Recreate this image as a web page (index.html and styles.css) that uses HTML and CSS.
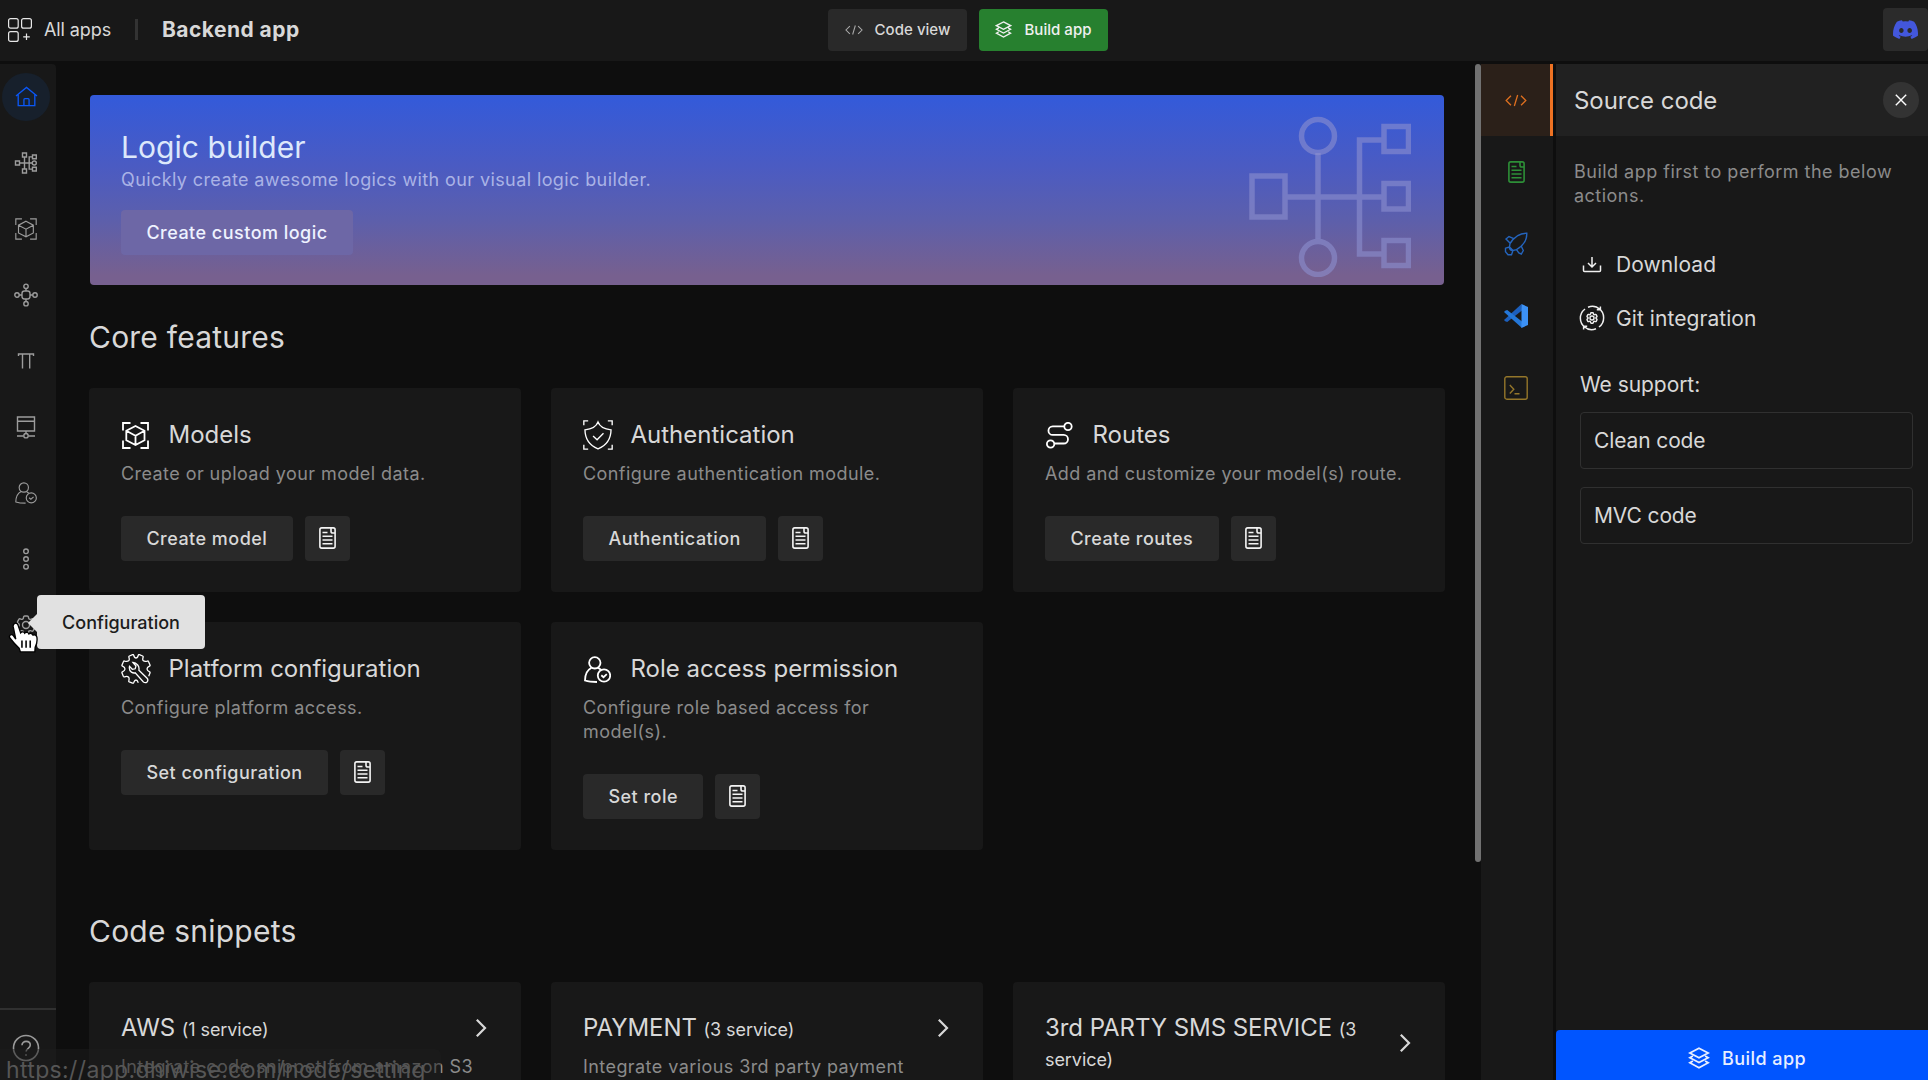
FILE: index.html
```html
<!DOCTYPE html>
<html lang="en">
<head>
<meta charset="utf-8">
<title>Backend app</title>
<link rel="stylesheet" href="styles.css">
</head>
<body>
<svg class="defs" width="0" height="0" aria-hidden="true">
  <symbol id="i-cube" viewBox="0 0 27 27"><path d="M1 8.500V1h7.500M18.500 1H26v7.500M26 18.500V26h-7.500M8.500 26H1v-7.500M13.500 4l9 4.800v9.500l-9 4.800-9.200-4.800V8.800zM4.300 8.800l9.200 4.900 9-4.900M13.500 13.700v9.400"/></symbol>
  <symbol id="i-shield" viewBox="0 0 29 29"><path d="M.8 5V.8H5M24 .8h4.200V5M28.200 24v4.200H24M5 28.200H.8V24M14.500 2C13 6 8 9 1.900 9.500 2 18 6 24.500 14.500 28 23 24.500 27 18 27.100 9.500 21 9 16 6 14.500 2zM9.700 15.500l3.900 3.600 6.200-6.200"/></symbol>
  <symbol id="i-route" viewBox="0 0 27 27"><circle cx="22" cy="4.500" r="3.700"/><circle cx="4.600" cy="22" r="3.700"/><path d="M18.200 4.400H6.700a4.200 4.200 0 0 0 0 8.500h11a4.200 4.200 0 0 1 0 8.600H8.500"/></symbol>
  <symbol id="i-doc" viewBox="0 0 17 22"><rect x=".9" y=".9" width="15.200" height="20.200" rx="1.800"/><path d="M12 1v3.200q0 1.800 1.800 1.800H16M3.500 5.500h5M3.500 9.300h10M3.500 13h10M3.500 16.800h10"/></symbol>
  <symbol id="i-tool" viewBox="0 0 30 30"><path d="M15 4q1.500 0 2.300-2.800.3-.8 1.100-.5L21.600 2q.8.400.5 1.200-.9 2.600.3 3.600t3.900.3q.9-.3 1.200.5L29 11q.3.800-.5 1.200Q26 13.400 26 15t2.600 2.800q.7.400.4 1.200l-1.300 3.300M15 4q-1.500 0-2.300-2.800-.3-.8-1.100-.5L8.400 2q-.8.400-.5 1.200.9 2.600-.3 3.600t-3.900.3q-.9-.3-1.200.5L1 11q-.3.800.5 1.200Q4 13.400 4 15t-2.600 2.800q-.7.400-.4 1.200l1.300 3.300q.4.800 1.200.5 2.700-.9 3.900.2t.4 3.700q-.3.800.5 1.200l3.200 1.200q.8.300 1.200-.5 1-2.600 2.300-2.600t2.300 2.800M12 8.500l3 3.500-.8 2.800-2.900.5-2.800-3q-.8 4 1.900 5.800 2 1.300 3.800.7l8.200 9.200q2 1.400 3.700-.1 1.500-2 0-3.700l-8.200-8q.6-3-1.200-5.200Q14.500 8.600 12 8.500z"/></symbol>
  <symbol id="i-role" viewBox="0 0 27 27"><circle cx="10.800" cy="6.800" r="5.700"/><path d="M7.500 11.700C3 14 1 18.500 1 24.500q4.500 1.500 12 1.500M14 11.700l3 2.100"/><circle cx="20" cy="19.500" r="6.200"/><path d="M17.300 19.300l2.200 1.900 3.300-3"/></symbol>
  <symbol id="i-home" viewBox="0 0 24 22"><path d="M1 10.500L12 1.500l11 9M3.300 9v11.500h17.400V9M9.300 20.500v-6.200q0-1 1-1h3.400q1 0 1 1v6.200"/></symbol>
  <symbol id="i-logic" viewBox="0 0 24 24"><path d="M1.500 10h4v4h-4zM8.500 2h4v4h-4zM8.500 18h4v4h-4zM18.500 4h3.800v3.800h-3.800zM18.500 16.200h3.800V20h-3.800zM5.500 12h12.700M10.500 6v12M18.500 5.900h-3.300v12.200h3.300"/><circle cx="20.300" cy="12" r="2"/></symbol>
  <symbol id="i-node" viewBox="0 0 24 24"><rect x="8" y="8" width="8" height="8" rx="2.400"/><circle cx="12" cy="3.300" r="2.200"/><circle cx="12" cy="20.700" r="2.200"/><circle cx="3" cy="12" r="2.200"/><circle cx="21" cy="12" r="2.200"/><path d="M12 5.500V8M12 16v2.500M5.200 12H8M16 12h2.800"/></symbol>
  <symbol id="i-pi" viewBox="0 0 24 24"><path d="M4.500 7V5h15v2M8.500 5v14.500M15.700 5v14.500"/></symbol>
  <symbol id="i-server" viewBox="0 0 24 24"><path d="M3.500 2h17v14h-17zM3.500 6.200h17M12 16v2.500M3 21h6.500M14.500 21H21"/><circle cx="12" cy="20.700" r="2.200"/></symbol>
  <symbol id="i-dots" viewBox="0 0 24 24"><circle cx="12" cy="4.300" r="2.300"/><circle cx="12" cy="12" r="2.300"/><circle cx="12" cy="19.700" r="2.300"/></symbol>
  <symbol id="i-gear" viewBox="0 0 24 24"><path d="M9.594 3.940c.09-.542.56-.94 1.110-.94h2.593c.55 0 1.020.398 1.110.94l.213 1.281c.063.374.313.686.645.87.074.04.147.083.22.127.325.196.72.257 1.075.124l1.217-.456a1.125 1.125 0 0 1 1.370.49l1.296 2.247a1.125 1.125 0 0 1-.26 1.431l-1.003.827c-.293.241-.438.613-.43.992a7.723 7.723 0 0 1 0 .255c-.008.378.137.75.43.991l1.004.827c.424.35.534.955.26 1.430l-1.298 2.247a1.125 1.125 0 0 1-1.369.491l-1.217-.456c-.355-.133-.75-.072-1.076.124a6.470 6.470 0 0 1-.22.128c-.331.183-.581.495-.644.869l-.213 1.281c-.09.543-.56.94-1.110.94h-2.594c-.55 0-1.019-.398-1.110-.94l-.213-1.281c-.062-.374-.312-.686-.644-.87a6.520 6.520 0 0 1-.22-.127c-.325-.196-.72-.257-1.076-.124l-1.217.456a1.125 1.125 0 0 1-1.369-.49l-1.297-2.247a1.125 1.125 0 0 1 .26-1.431l1.004-.827c.292-.24.437-.613.43-.991a6.932 6.932 0 0 1 0-.255c.007-.38-.138-.751-.43-.992l-1.004-.827a1.125 1.125 0 0 1-.26-1.430l1.297-2.247a1.125 1.125 0 0 1 1.370-.491l1.216.456c.356.133.751.072 1.076-.124.072-.044.146-.086.22-.128.332-.183.582-.495.644-.869z"/><circle cx="12" cy="12" r="3.500"/></symbol>
  <symbol id="i-code" viewBox="0 0 24 14"><path d="M6.500 1.800L1.300 7l5.200 5.200M17.500 1.800L22.700 7l-5.200 5.200M13.800 1l-3.600 12"/></symbol>
  <symbol id="i-layers" viewBox="0 0 18 18"><path d="M9 1l7.500 3.900L9 8.800 1.500 4.900zM4 7.300L1.500 8.800 9 12.700l7.500-3.900L14 7.300M4 11.400l-2.500 1.500L9 16.900l7.500-4-2.500-1.500"/></symbol>
  <symbol id="i-chev" viewBox="0 0 12 20"><path d="M1.800 1.800L10 10l-8.200 8.200"/></symbol>
</svg>

<header class="topbar">
  <a class="all-apps">
    <svg class="ico apps-ico" viewBox="0 0 24 24"><rect x=".6" y=".6" width="9.600" height="9.600" rx="2"/><rect x="13.600" y=".6" width="9.800" height="9.600" rx="2"/><rect x=".6" y="13.600" width="9.600" height="9.800" rx="2"/><path d="M18.500 15.500v6.600M15.200 18.800h6.600"/></svg>
    <span>All apps</span>
  </a>
  <span class="divider"></span>
  <h1 class="app-name">Backend app</h1>
  <div class="actions">
    <button class="btn-top"><svg class="ico code-ico"><use href="#i-code"/></svg>Code view</button>
    <button class="btn-top green"><svg class="ico lay-ico"><use href="#i-layers"/></svg>Build app</button>
  </div>
  <span class="discord"><svg viewBox="0 0 24 18"><path d="M20.300 1.500A19.800 19.800 0 0 0 15.400 0l-.7 1.300a18.300 18.300 0 0 0-5.400 0L8.600 0a19.700 19.700 0 0 0-4.900 1.500C.6 6.100-.3 10.600.1 15a19.900 19.900 0 0 0 6 3l1.300-2.100-1.900-.9.500-.4a14.200 14.200 0 0 0 12.100 0l.4.400-1.900.9 1.300 2.100a19.800 19.800 0 0 0 6-3c.5-5.100-.8-9.600-3.600-13.500zM8 12.300c-1.200 0-2.100-1.100-2.100-2.400s.9-2.400 2.100-2.400 2.200 1.100 2.200 2.400-1 2.400-2.200 2.400zm8 0c-1.200 0-2.200-1.100-2.200-2.400s1-2.400 2.200-2.400 2.200 1.100 2.200 2.400-1 2.400-2.200 2.400z"/></svg></span>
</header>

<div class="body">
  <nav class="side">
    <a class="nav on"><svg class="ico home"><use href="#i-home"/></svg></a>
    <a class="nav"><svg class="ico"><use href="#i-logic"/></svg></a>
    <a class="nav"><svg class="ico cube"><use href="#i-cube"/></svg></a>
    <a class="nav"><svg class="ico"><use href="#i-node"/></svg></a>
    <a class="nav"><svg class="ico"><use href="#i-pi"/></svg></a>
    <a class="nav"><svg class="ico"><use href="#i-server"/></svg></a>
    <a class="nav"><svg class="ico cube"><use href="#i-role"/></svg></a>
    <a class="nav"><svg class="ico"><use href="#i-dots"/></svg></a>
    <a class="nav"><svg class="ico"><use href="#i-gear"/></svg>
      <span class="tip">Configuration</span>
      <svg class="hand" viewBox="0 0 30 32"><path d="M7.500 17.500L5 5.500C4.500 2 8.500.8 9.700 4l2.500 7.500c1-1.500 3.500-1.200 4 .3 1.200-1.300 3.500-.8 4 .7 1.300-1 3.500-.3 4 1.200 1.500-.8 3.500 0 3.800 2 .6 4-.2 7-1.700 9.800L26 30H12l-1.200-3.500C8 24 4.500 20 1.800 16.500c-1.500-2.500 1.500-4.500 3.500-2.200z"/><path class="knuckle" d="M13.500 19v7M17.500 19v7M21.500 19v7"/></svg>
    </a>
    <div class="help"><svg class="ico" viewBox="0 0 28 28"><circle cx="14" cy="14" r="12.500"/><path d="M10 11.300c0-5.300 8.300-5 8.300-.2 0 3.200-4.200 3.200-4.200 6.500M14 20.300v1.400"/></svg></div>
  </nav>

  <main class="main">
    <section class="hero">
      <div>
        <h2>Logic builder</h2>
        <p>Quickly create awesome logics with our visual logic builder.</p>
        <button class="btn glass">Create custom logic</button>
      </div>
      <svg class="hero-art" viewBox="0 0 162 162"><path d="M3 61h33v41H3zM135 11.500h24.500v25H135zM135 68.500h24.500V94H135zM135 125.500h24.500v25H135zM36 82h99M69 38v86M135 25h-24.500v114H135"/><circle cx="69" cy="21" r="16.500"/><circle cx="69" cy="143" r="16.500"/></svg>
    </section>

    <h2 class="heading core">Core features</h2>
    <div class="grid">
      <article class="card">
        <h3><svg class="ico ci"><use href="#i-cube"/></svg>Models</h3>
        <p>Create or upload your model data.</p>
        <div class="row"><button class="btn">Create model</button><button class="btn sq"><svg class="ico doc"><use href="#i-doc"/></svg></button></div>
      </article>
      <article class="card">
        <h3><svg class="ico ci thin"><use href="#i-shield"/></svg>Authentication</h3>
        <p>Configure authentication module.</p>
        <div class="row"><button class="btn">Authentication</button><button class="btn sq"><svg class="ico doc"><use href="#i-doc"/></svg></button></div>
      </article>
      <article class="card">
        <h3><svg class="ico ci"><use href="#i-route"/></svg>Routes</h3>
        <p>Add and customize your model(s) route.</p>
        <div class="row"><button class="btn">Create routes</button><button class="btn sq"><svg class="ico doc"><use href="#i-doc"/></svg></button></div>
      </article>
      <article class="card">
        <h3><svg class="ico ci thin"><use href="#i-tool"/></svg>Platform configuration</h3>
        <p>Configure platform access.</p>
        <div class="row"><button class="btn">Set configuration</button><button class="btn sq"><svg class="ico doc"><use href="#i-doc"/></svg></button></div>
      </article>
      <article class="card">
        <h3><svg class="ico ci"><use href="#i-role"/></svg>Role access permission</h3>
        <p>Configure role based access for model(s).</p>
        <div class="row"><button class="btn">Set role</button><button class="btn sq"><svg class="ico doc"><use href="#i-doc"/></svg></button></div>
      </article>
    </div>

    <h2 class="heading snips">Code snippets</h2>
    <div class="grid">
      <article class="card snip">
        <div class="snip-head"><h3>AWS <small>(1 service)</small></h3><svg class="ico chev"><use href="#i-chev"/></svg></div>
        <p>Integrate code snippet from amazon S3</p>
      </article>
      <article class="card snip">
        <div class="snip-head"><h3>PAYMENT <small>(3 service)</small></h3><svg class="ico chev"><use href="#i-chev"/></svg></div>
        <p>Integrate various 3rd party payment</p>
      </article>
      <article class="card snip">
        <div class="snip-head"><h3>3rd PARTY SMS SERVICE <small>(3 service)</small></h3><svg class="ico chev"><use href="#i-chev"/></svg></div>
      </article>
    </div>
  </main>

  <div class="track"><div class="thumb"></div></div>

  <div class="tabs">
    <a class="tab t-code"><svg class="ico"><use href="#i-code"/></svg></a>
    <a class="tab t-doc"><svg class="ico doc"><use href="#i-doc"/></svg></a>
    <a class="tab t-ship"><svg class="ico" viewBox="0 0 24 24"><path d="M22.800 1.200C16 1 10.500 4.500 6 11.500L5.500 15 9 18.500l3.500-.8C19.500 13.500 23 8 22.800 1.200zM9.800 6.700L5 4.500 2 7l4.500 4.500M17.300 14.200l2 4.300-2 3.500-2.500-1-2.300-3.300M5.500 15l-4 1.200v3.500l2.500 3h3.500L9 18.500M5.500 15c-.5 2 1.500 4 3.500 3.500"/></svg></a>
    <a class="tab"><svg class="vs" viewBox="0 0 24 24"><path fill="#1c5fbd" d="M17.500 0L18 6.500 3.200 18 1.200 17.200 0 16z"/><path fill="#2477d8" d="M1.200 6.800L3.200 6 18 17.500V24L0 8z"/><path fill="#3c91f5" d="M17.500 0L24 3v18l-6.500 3z"/></svg></a>
    <a class="tab t-term"><svg class="ico" viewBox="0 0 24 24"><rect x=".8" y=".8" width="22.400" height="22.400" rx="2"/><path d="M5.800 9l4 4.200-4 4.200M10.500 17.800h5"/></svg></a>
  </div>

  <aside class="panel">
    <div class="panel-head"><h2>Source code</h2><span class="close"><svg class="ico" viewBox="0 0 12 12"><path d="M.8.8l10.400 10.400M11.200.8L.8 11.200"/></svg></span></div>
    <p class="note">Build app first to perform the below actions.</p>
    <a class="link"><svg class="ico" viewBox="0 0 24 24"><path d="M3.500 13.500v5q0 1 1 1h15q1 0 1-1v-5M12 5v9.800M8 11l4 4 4-4"/></svg>Download</a>
    <a class="link"><svg class="ico git" viewBox="0 0 24 24"><path d="M5.200 21.600A11.500 11.500 0 0 1 5 3M8 1.200a11.500 11.500 0 0 1 12 2.300M18.800 2.400A11.500 11.500 0 0 1 19 21M16 22.800a11.500 11.500 0 0 1-12-2.300M20.400.5v3.300h-3.600M3.600 23.500v-3.300h3.600"/><use href="#i-gear" x="5" y="5" width="14" height="14" stroke-width="2.400"/></svg>Git integration</a>
    <h4>We support:</h4>
    <div class="box">Clean code</div>
    <div class="box">MVC code</div>
    <button class="build"><svg class="ico"><use href="#i-layers"/></svg>Build app</button>
  </aside>
</div>
<div class="status">https://app.dhiwise.com/node/setting</div>
</body>
</html>
```
FILE: styles.css
```css
* { box-sizing: border-box; margin: 0; padding: 0; }
body {
  width: 1928px; height: 1080px; overflow: hidden; position: relative;
  display: flex; flex-direction: column;
  background: #0e0e0e; color: #d8d8d8;
  font-family: Inter, "Liberation Sans", sans-serif; font-size: 18px;
}
h1, h2, h3, h4 { font-weight: 400; }
button { border: 0; font: inherit; color: inherit; }
.defs { position: absolute; }
.ico { fill: none; stroke: currentColor; stroke-width: 1.4; width: 24px; height: 24px; flex: none; overflow: visible; }

.topbar { height: 61px; flex: none; background: #181818; display: flex; align-items: center; position: relative; padding: 0 0 2px 8px; }
.all-apps { display: flex; align-items: center; gap: 12px; width: 127px; letter-spacing: -.1px; }
.apps-ico { stroke: #e8e8e8; stroke-width: 1.2; }
.divider { width: 3px; height: 21px; background: #333; }
.app-name { margin-left: 24px; font-size: 21px; font-weight: 700; letter-spacing: .45px; }
.actions { position: absolute; left: 828px; top: 9px; display: flex; gap: 12px; }
.btn-top { height: 42px; width: 139px; border-radius: 4px; background: #292929; display: flex; align-items: center; justify-content: center; gap: 12px; font-size: 15px; font-weight: 500; letter-spacing: .04px; padding-bottom: 1px; }
.btn-top.green { background: #27802f; width: 129px; color: #f0f0f0; }
.code-ico { width: 18px; height: 12px; stroke: #aaa; }
.lay-ico { width: 17px; height: 17px; }
.discord { position: absolute; right: 0; top: 8px; width: 45px; height: 43px; background: #2b2b2b; border-radius: 4px; display: flex; align-items: center; justify-content: center; }
.discord svg { width: 25px; height: 19px; fill: #4357dc; }

.body { flex: 1; display: flex; padding-top: 3px; min-height: 0; }
.side { width: 56px; flex: none; background: #181818; border-top-right-radius: 4px; padding-top: 9px; display: flex; flex-direction: column; gap: 18px; position: relative; }
.nav { width: 48px; height: 48px; margin-left: 2px; border-radius: 50%; display: flex; align-items: center; justify-content: center; color: #9c9c9c; position: relative; flex: none; }
.nav.on { background: #17202c; color: #0b57f5; }
.home { width: 23px; height: 21px; margin-bottom: 2px; }
.cube { width: 22px; height: 22px; }
.tip { position: absolute; left: 35px; top: -6px; width: 168px; height: 54px; background: #e1e1e1; color: #1c1c1c; border-radius: 4px; display: flex; align-items: center; justify-content: center; font-size: 18px; font-weight: 500; z-index: 5; }
.tip::before { content: ""; position: absolute; left: -9px; top: 19px; border: solid transparent; border-width: 9px 9px 9px 0; border-right-color: #e1e1e1; }
.hand { position: absolute; left: 6px; top: 20px; width: 31px; height: 33px; fill: #fff; stroke: #000; stroke-width: 1.3; z-index: 6; }
.knuckle { stroke: #000; stroke-width: 1.5; }
.help { margin-top: auto; height: 72px; border-top: 2px solid #303030; padding: 24px 0 0 12px; color: #9a9a9a; }
.help .ico { width: 28px; height: 28px; stroke-width: 1.6; }

.main { width: 1419px; flex: none; padding: 31px 30px 0 33px; overflow: hidden; }
.hero { height: 190px; margin-left: 1px; margin-right: 1px; border-radius: 4px; background: linear-gradient(#335ada, #4b5bc2 38%, #5c5fac 65%, #77608f 95%); padding: 32px 33px 0 31px; display: flex; justify-content: space-between; }
.hero h2 { font-size: 30px; line-height: 40px; color: #dde8fb; letter-spacing: .05px; }
.hero p { line-height: 24px; margin-top: 1px; color: #aab3e6; letter-spacing: .4px; }
.btn { height: 45px; padding: 0 25.4px; border-radius: 4px; background: #292929; font-weight: 500; letter-spacing: .48px; white-space: nowrap; }
.glass { margin-top: 18px; background: #6d67a6; color: #eef2ff; }
.hero-art { width: 162px; height: 162px; margin-top: -12px; fill: none; stroke: #8c90cf; stroke-opacity: .6; stroke-width: 5.500; }
.heading { font-size: 30px; line-height: 36px; letter-spacing: .22px; }
.core { margin: 34px 0 33px; }
.snips { margin: 63px 0 33px; }
.grid { display: grid; grid-template-columns: repeat(3, 432px); gap: 30px; }
.card { background: #181818; border-radius: 4px; padding: 29px 32px 31px; }
.card h3 { font-size: 24px; line-height: 36px; display: flex; align-items: center; letter-spacing: 0; }
.card p { line-height: 24px; margin-top: 9px; color: #8b8b8b; letter-spacing: .43px; }
.ci { width: 27px; height: 27px; margin: 0 19.5px 0 1px; stroke: #fff; stroke-width: 1.8; }
.ci.thin { width: 30px; height: 30px; margin: 0 17.5px 0 0; stroke-width: 1.3; }
.row { display: flex; gap: 12px; margin-top: 30px; }
.sq { width: 45px; padding: 0; display: flex; align-items: center; justify-content: center; }
.sq .doc { margin-bottom: 1px; }
.doc { width: 17px; height: 22px; stroke: #f4f4f4; stroke-width: 1.6; }
.snip { height: 200px; }
.snip-head { display: flex; justify-content: space-between; align-items: center; padding: 2px 0 3px; }
.card .snip-head h3 { display: block; width: 330px; line-height: 30px; letter-spacing: -.07px; }
.snip-head small { font-size: 18px; line-height: 24px; }
.chev { width: 12px; height: 20px; stroke-width: 2.2; margin-right: 2px; }

.track { width: 6px; flex: none; }
.thumb { height: 798px; background: #717171; border-radius: 3px; }
.tabs { width: 72px; flex: none; background: #181818; }
.tab { height: 72px; display: flex; align-items: center; justify-content: center; padding-right: 2px; }
.t-code { background: #2b2019; border-right: 3px solid #ee7223; color: #e0701f; padding: 0 0 0 1px; }
.t-code .ico { width: 22px; height: 13px; }
.t-doc .doc { stroke: #2d8f37; }
.t-ship { color: #2464bd; }
.vs { width: 24px; height: 24px; }
.t-term { color: #94762a; }
.panel { width: 372px; margin-left: 3px; background: #181818; display: flex; flex-direction: column; }
.panel-head { height: 72px; background: #212121; display: flex; align-items: center; justify-content: space-between; padding: 0 9px 0 18px; }
.panel-head h2 { font-size: 24px; letter-spacing: -.05px; }
.close { width: 36px; height: 36px; border-radius: 50%; background: #333; display: flex; align-items: center; justify-content: center; color: #fff; }
.close .ico { width: 12px; height: 12px; }
.note { margin: 24px 18px 29px; line-height: 24px; letter-spacing: .48px; color: #8b8b8b; }
.link { display: flex; align-items: center; gap: 12px; height: 54px; padding-left: 24px; font-size: 21px; letter-spacing: .07px; }
.link .ico { stroke: #f0f0f0; stroke-width: 1.5; }
.git { stroke-width: 1.3; }
.panel h4 { font-size: 21px; letter-spacing: -.05px; line-height: 30px; margin: 25px 24px 12px; }
.box { height: 57px; margin: 0 15px 18px 24px; border: 1px solid #303030; border-radius: 4px; padding-left: 13px; display: flex; align-items: center; font-size: 21px; letter-spacing: -.12px; }
.build { margin-top: auto; height: 50px; background: #0055ff; border-top-left-radius: 4px; display: flex; align-items: center; justify-content: center; gap: 12px; font-weight: 500; color: #e8efff; letter-spacing: .45px; padding: 6px 0 0 10px; }
.build .ico { width: 22px; height: 22px; }
.status { position: absolute; left: 0; bottom: 0; width: 441px; height: 31px; background: rgba(28, 28, 28, .5); border-top-right-radius: 6px; color: #565656; font-size: 23px; line-height: 42px; padding-left: 6px; letter-spacing: .36px; white-space: nowrap; overflow: hidden; z-index: 8; }
```
